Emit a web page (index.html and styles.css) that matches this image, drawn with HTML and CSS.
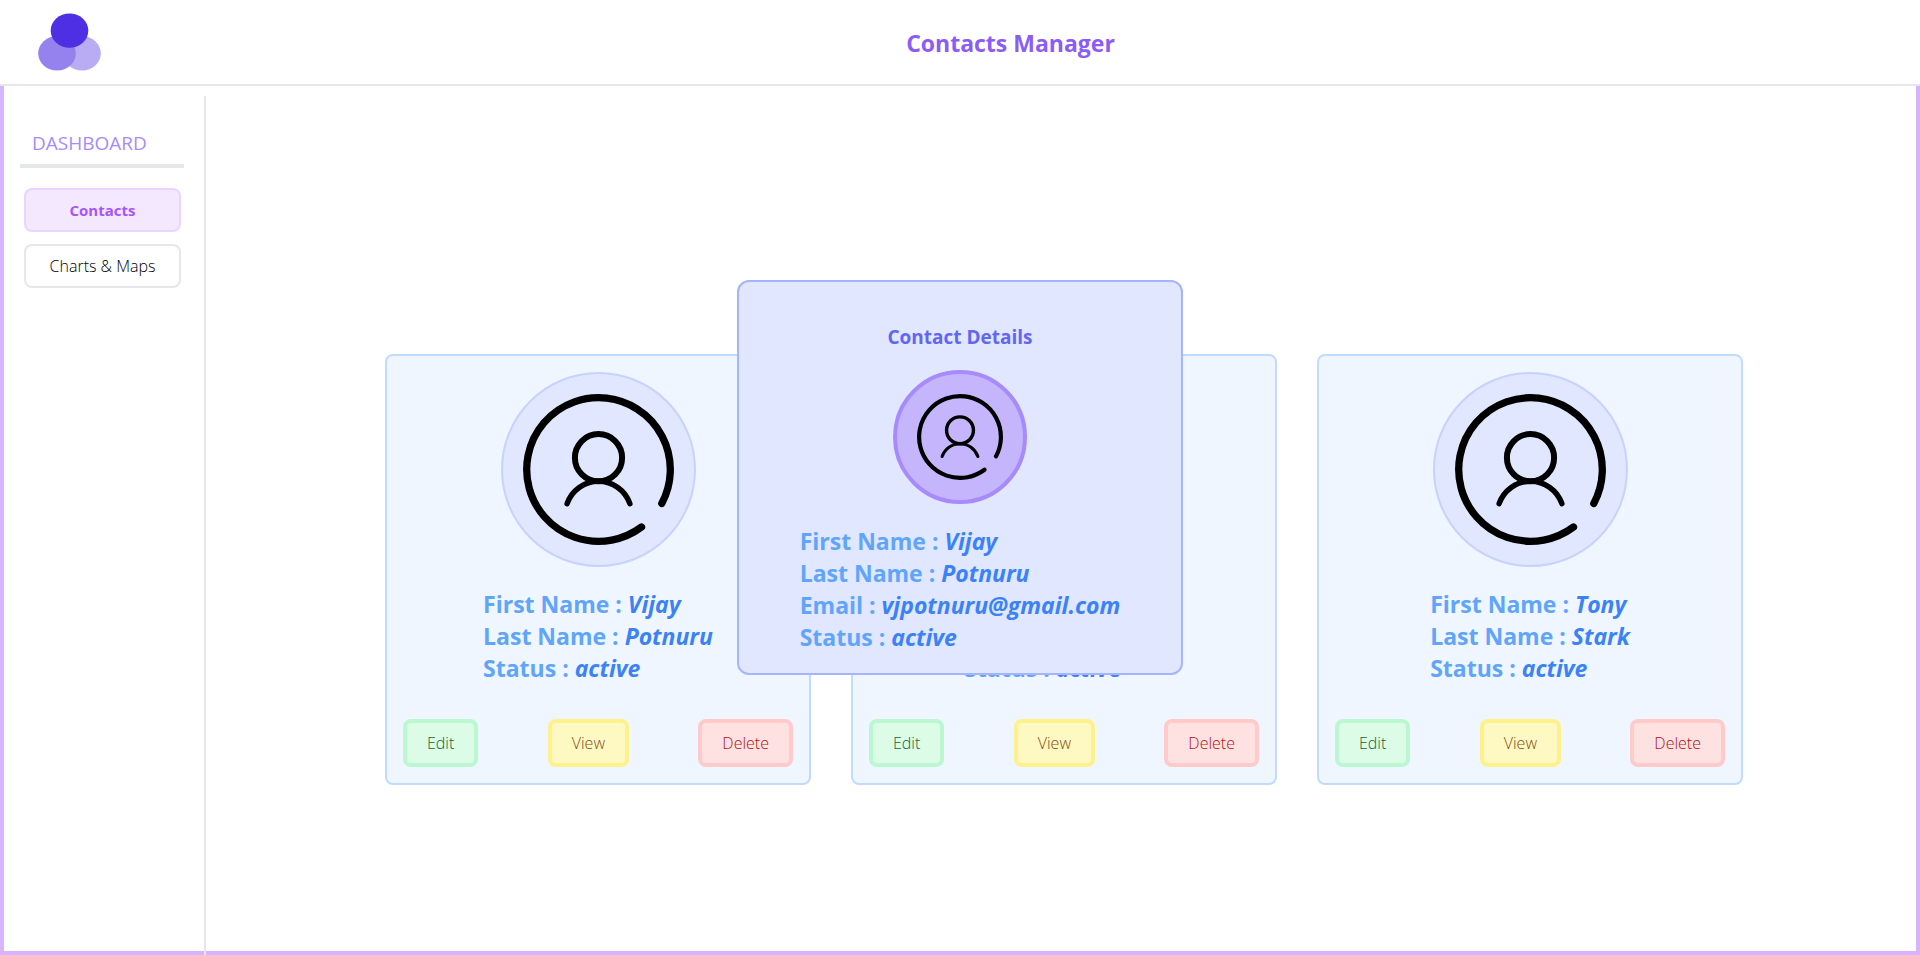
FILE: index.html
```html
<!DOCTYPE html>
<html lang="en">
<head>
<meta charset="utf-8">
<title>Contacts Manager</title>
<link rel="stylesheet" href="styles.css">
</head>
<body>
<svg class="sprite" aria-hidden="true">
  <symbol id="user" viewBox="-75.5 -75.5 151 151">
    <g fill="none" stroke="#000" stroke-linecap="round">
      <path stroke-width="7.3" d="M63.28 33.93A71.8 71.8 0 1 0 43.01 57.49"/>
      <circle stroke-width="6" cx="0" cy="-11.8" r="23.6"/>
      <path stroke-width="5.4" d="M-31.4 34.2A33.2 33.2 0 0 1 31.4 34.2"/>
    </g>
  </symbol>
</svg>
<header class="topbar">
  <svg class="logo" viewBox="0 0 64 60" role="img" aria-label="Logo">
    <ellipse cx="45" cy="41.3" rx="18.8" ry="17.2" fill="#b9acf5"/>
    <ellipse cx="20" cy="41.3" rx="18.8" ry="17.2" fill="#9582ef"/>
    <ellipse cx="32.5" cy="18.6" rx="18.8" ry="17.2" fill="#4f2fe4"/>
  </svg>
  <h1 class="title">Contacts Manager</h1>
</header>
<div class="layout">
  <nav class="sidebar">
    <h2 class="sidebar-title">DASHBOARD</h2>
    <div class="menu">
      <button class="menu-item active" type="button">Contacts</button>
      <button class="menu-item" type="button">Charts &amp; Maps</button>
    </div>
  </nav>
  <main class="cards">
    <article class="card">
      <span class="avatar"><svg class="icon"><use href="#user"/></svg></span>
      <div class="info">
        <p>First Name : <em>Vijay</em></p>
        <p>Last Name : <em>Potnuru</em></p>
        <p>Status : <em>active</em></p>
      </div>
      <div class="actions">
        <button class="btn edit" type="button">Edit</button>
        <button class="btn view" type="button">View</button>
        <button class="btn delete" type="button">Delete</button>
      </div>
    </article>
    <article class="card">
      <span class="avatar"><svg class="icon"><use href="#user"/></svg></span>
      <div class="info">
        <p>First Name : <em>Tony</em></p>
        <p>Last Name : <em>Stark</em></p>
        <p>Status : <em>active</em></p>
      </div>
      <div class="actions">
        <button class="btn edit" type="button">Edit</button>
        <button class="btn view" type="button">View</button>
        <button class="btn delete" type="button">Delete</button>
      </div>
    </article>
    <article class="card">
      <span class="avatar"><svg class="icon"><use href="#user"/></svg></span>
      <div class="info">
        <p>First Name : <em>Tony</em></p>
        <p>Last Name : <em>Stark</em></p>
        <p>Status : <em>active</em></p>
      </div>
      <div class="actions">
        <button class="btn edit" type="button">Edit</button>
        <button class="btn view" type="button">View</button>
        <button class="btn delete" type="button">Delete</button>
      </div>
    </article>
  </main>
</div>
<div class="overlay">
  <section class="modal" role="dialog" aria-labelledby="modal-title">
    <h2 class="modal-title" id="modal-title">Contact Details</h2>
    <span class="avatar small"><svg class="icon"><use href="#user"/></svg></span>
    <div class="info">
      <p>First Name : <em>Vijay</em></p>
      <p>Last Name : <em>Potnuru</em></p>
      <p>Email : <em>vjpotnuru@gmail.com</em></p>
      <p>Status : <em>active</em></p>
    </div>
  </section>
</div>
</body>
</html>
```
FILE: styles.css
```css
*,
*::before,
*::after {
  box-sizing: border-box;
}

body {
  display: flex;
  flex-direction: column;
  min-height: 100vh;
  margin: 0;
  background: #fff;
  color: #000;
  font-family: "Segoe UI", "Open Sans", "Noto Sans", sans-serif;
  font-size: 16px;
  line-height: 24px;
}

h1,
h2,
p {
  margin: 0;
}

button {
  font: inherit;
  cursor: pointer;
}

.sprite {
  position: absolute;
  width: 0;
  height: 0;
}

.topbar {
  display: flex;
  align-items: center;
  padding: 12px 0 12px 37px;
  border-bottom: 2px solid #e5e7eb;
}

.logo {
  width: 64px;
  height: 60px;
}

.title {
  flex: 1;
  padding-top: 2px;
  color: #8b5cf6;
  font-size: 23px;
  font-weight: 700;
  line-height: 32px;
  text-align: center;
}

.layout {
  display: flex;
  flex: 1;
  border: 4px solid #d8b4fe;
  border-top: 0;
}

.sidebar {
  width: 202px;
  margin: 10px 0 -4px;
  padding: 33px 20px 0 16px;
  border-right: 2px solid #e5e7eb;
}

.sidebar-title {
  padding: 0 12px 7px;
  border-bottom: 4px solid #e5e7eb;
  color: #a78bfa;
  font-size: 19px;
  font-weight: 400;
  line-height: 28px;
}

.menu {
  display: flex;
  flex-direction: column;
  gap: 12px;
  padding: 20px 3px 0 4px;
}

.menu-item {
  padding: 8px 12px;
  border: 2px solid #e5e7eb;
  border-radius: 8px;
  background: #fff;
  color: #000;
  font-weight: 300;
}

.menu-item.active {
  border-color: #e9d5ff;
  background: #f3e8ff;
  color: #a855f7;
  font-size: 15px;
  font-weight: 700;
}

.cards {
  display: grid;
  flex: 1;
  grid-template-columns: repeat(3, minmax(0, 426px));
  gap: 40px;
  align-content: center;
  justify-content: center;
  padding: 102px 0 0 6px;
}

.card {
  display: flex;
  flex-direction: column;
  align-items: center;
  padding: 16px;
  border: 2px solid #bfdbfe;
  border-radius: 8px;
  background: #eff6ff;
}

.avatar {
  display: flex;
  padding: 20px;
  border: 2px solid #c7d2fe;
  border-radius: 50%;
  background: #e0e7ff;
}

.avatar.small {
  border: 4px solid #a78bfa;
  background: #c4b5fd;
}

.icon {
  width: 151px;
  height: 151px;
}

.small .icon {
  width: 86px;
  height: 86px;
}

.info {
  margin-top: 21px;
  color: #60a5fa;
  font-size: 23px;
  font-weight: 700;
  line-height: 32px;
}

.info em {
  color: #3b82f6;
}

.actions {
  display: flex;
  align-self: stretch;
  justify-content: space-between;
  margin-top: 35px;
}

.btn {
  padding: 8px 20px;
  border: 4px solid;
  border-radius: 8px;
  font-weight: 300;
}

.edit {
  border-color: #bbf7d0;
  background: #dcfce7;
  color: #166534;
}

.view {
  border-color: #fef08a;
  background: #fef9c3;
  color: #854d0e;
}

.delete {
  border-color: #fecaca;
  background: #fee2e2;
  color: #b00f0f;
}

.overlay {
  position: fixed;
  inset: 0;
  display: flex;
  align-items: center;
  justify-content: center;
}

.modal {
  display: flex;
  flex-direction: column;
  align-items: center;
  min-width: 446px;
  padding: 41px 52px 20px;
  border: 2px solid #a5b4fc;
  border-radius: 12px;
  background: #e0e7ff;
}

.modal-title {
  margin-bottom: 19px;
  color: #6366f1;
  font-size: 19px;
  font-weight: 700;
  line-height: 28px;
}
```
